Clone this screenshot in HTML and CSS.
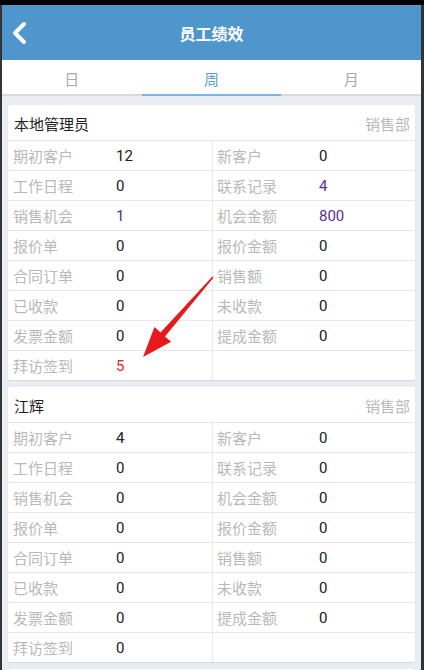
FILE: index.html
```html
<!DOCTYPE html>
<html lang="zh-CN">
<head>
<meta charset="utf-8">
<title>员工绩效</title>
<link rel="stylesheet" href="styles.css">
</head>
<body>
<div class="statusbar"></div>
<div class="app">
  <header class="topbar">
    <svg class="back" width="16" height="24" viewBox="0 0 16 24"><path d="M13 3 L4 12 L13 21" fill="none" stroke="#fff" stroke-width="4" stroke-linecap="round" stroke-linejoin="round"/></svg>
    <h1 class="title">员工绩效</h1>
  </header>
  <nav class="tabs">
    <div class="tab">日</div>
    <div class="tab active">周</div>
    <div class="tab">月</div>
  </nav>
  <main class="list">
    <section class="card">
      <div class="card-head"><span class="name">本地管理员</span><span class="dept">销售部</span></div>
      <div class="grid">
        <div class="cell"><span class="label">期初客户</span><span class="val">12</span></div>
        <div class="cell"><span class="label">新客户</span><span class="val">0</span></div>
        <div class="cell"><span class="label">工作日程</span><span class="val">0</span></div>
        <div class="cell"><span class="label">联系记录</span><span class="val link">4</span></div>
        <div class="cell"><span class="label">销售机会</span><span class="val link">1</span></div>
        <div class="cell"><span class="label">机会金额</span><span class="val link">800</span></div>
        <div class="cell"><span class="label">报价单</span><span class="val">0</span></div>
        <div class="cell"><span class="label">报价金额</span><span class="val">0</span></div>
        <div class="cell"><span class="label">合同订单</span><span class="val">0</span></div>
        <div class="cell"><span class="label">销售额</span><span class="val">0</span></div>
        <div class="cell"><span class="label">已收款</span><span class="val">0</span></div>
        <div class="cell"><span class="label">未收款</span><span class="val">0</span></div>
        <div class="cell"><span class="label">发票金额</span><span class="val">0</span></div>
        <div class="cell"><span class="label">提成金额</span><span class="val">0</span></div>
        <div class="cell"><span class="label">拜访签到</span><span class="val alert">5</span></div>
        <div class="cell"></div>
      </div>
    </section>
    <section class="card">
      <div class="card-head"><span class="name">江辉</span><span class="dept">销售部</span></div>
      <div class="grid">
        <div class="cell"><span class="label">期初客户</span><span class="val">4</span></div>
        <div class="cell"><span class="label">新客户</span><span class="val">0</span></div>
        <div class="cell"><span class="label">工作日程</span><span class="val">0</span></div>
        <div class="cell"><span class="label">联系记录</span><span class="val">0</span></div>
        <div class="cell"><span class="label">销售机会</span><span class="val">0</span></div>
        <div class="cell"><span class="label">机会金额</span><span class="val">0</span></div>
        <div class="cell"><span class="label">报价单</span><span class="val">0</span></div>
        <div class="cell"><span class="label">报价金额</span><span class="val">0</span></div>
        <div class="cell"><span class="label">合同订单</span><span class="val">0</span></div>
        <div class="cell"><span class="label">销售额</span><span class="val">0</span></div>
        <div class="cell"><span class="label">已收款</span><span class="val">0</span></div>
        <div class="cell"><span class="label">未收款</span><span class="val">0</span></div>
        <div class="cell"><span class="label">发票金额</span><span class="val">0</span></div>
        <div class="cell"><span class="label">提成金额</span><span class="val">0</span></div>
        <div class="cell"><span class="label">拜访签到</span><span class="val">0</span></div>
        <div class="cell"></div>
      </div>
    </section>
    <section class="card">
      <div class="card-head"><span class="name"></span><span class="dept"></span></div>
    </section>
  </main>
  <!-- annotation arrow pointing at the check-in count -->
  <svg class="pointer" width="424" height="670" viewBox="0 0 424 670">
    <polygon fill="#e8191c" points="213.6,277.6 212.4,276.4 160.5,332.4 154.5,327.1 143,357 171.1,341.7 165,336.4"/>
  </svg>
</div>
</body>
</html>
```

FILE: styles.css
```css
* { box-sizing: border-box; }

html, body {
  margin: 0;
  padding: 0;
}

body {
  width: 424px;
  height: 670px;
  overflow: hidden;
  background: #2f3438;
  font-family: Roboto, "Noto Sans CJK SC", sans-serif;
}

.statusbar {
  height: 5px;
  background: #000;
}

.app {
  margin: 0 3px 0 2px;
  height: 665px;
  background: #e9edf1;
  overflow: hidden;
}

.topbar {
  height: 55px;
  background: #4f96cc;
  display: flex;
  align-items: center;
  justify-content: center;
  position: relative;
}

.back {
  position: absolute;
  left: 9px;
  top: 16px;
}

.title {
  margin: 0;
  color: #fff;
  font-size: 16px;
  font-weight: bold;
}

.tabs {
  display: flex;
  background: #fff;
  height: 36px;
  border-bottom: 2px solid #d6d9dd;
}

.tab {
  flex: 1;
  display: flex;
  align-items: center;
  justify-content: center;
  font-size: 15px;
  color: #a9a9a9;
  margin-bottom: -2px;
  border-bottom: 2px solid transparent;
  padding-top: 2px;
}

.tab.active {
  color: #5e9fd6;
  border-bottom-color: #7db3e2;
}

.list {
  padding: 9px 6px 0;
  display: flex;
  flex-direction: column;
  gap: 7px;
}

.card {
  background: #fff;
  border-radius: 2px;
  box-shadow: 0 1px 1px #d3d8dd;
}

.card-head {
  height: 35px;
  display: flex;
  align-items: center;
  justify-content: space-between;
  padding: 1px 5px 0 6px;
}

.name {
  font-size: 15px;
  color: #1e1e1e;
}

.dept {
  font-size: 15px;
  color: #b8b8b8;
}

.grid {
  display: grid;
  grid-template-columns: 205px 1fr;
}

.cell {
  height: 30px;
  border-top: 1px solid #e8e8e8;
  display: flex;
  align-items: center;
  padding-left: 5px;
}

.cell:nth-child(odd) {
  border-right: 1px solid #e8e8e8;
}

.cell:nth-child(even) {
  padding-left: 4px;
}

.label {
  width: 103px;
  font-size: 15px;
  color: #b9b9b9;
}

.cell:nth-child(even) .label {
  width: 102px;
}

.val {
  font-size: 15px;
  color: #202020;
}

.val.link { color: #5a2d91; }
.val.alert { color: #e1252a; }

.pointer {
  position: absolute;
  left: 0;
  top: 0;
  pointer-events: none;
}
```
